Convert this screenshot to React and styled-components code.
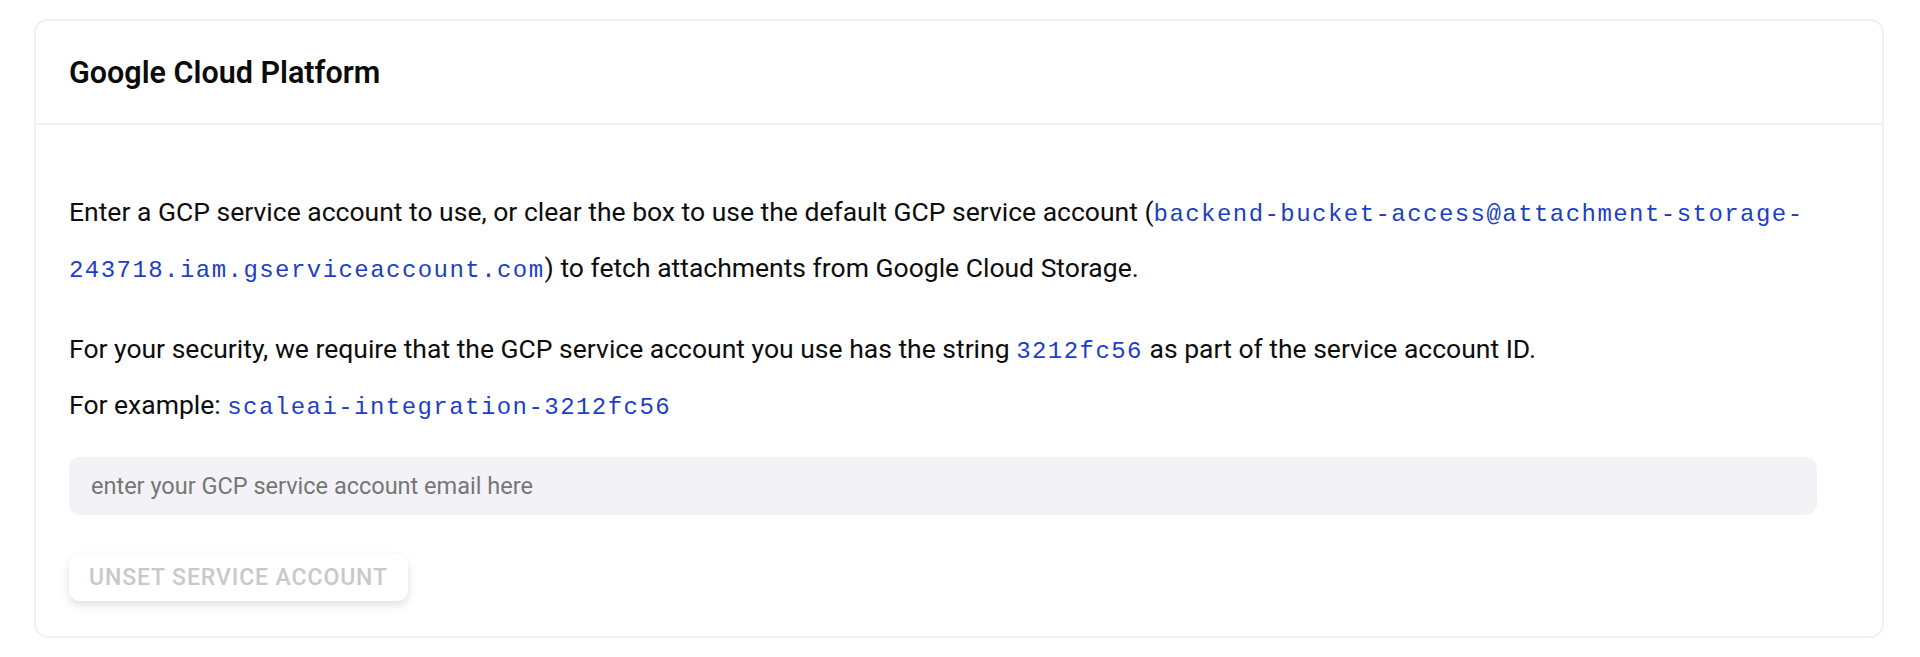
import React from "react";
import styled, { createGlobalStyle } from "styled-components";

const GlobalStyle = createGlobalStyle`
  * { box-sizing: border-box; }
  body {
    margin: 0;
    background: #ffffff;
    font-family: Roboto, "Noto Sans", Arial, sans-serif;
    color: #0d0d0d;
  }
`;

const Page = styled.div`
  padding: 19px 36px 20px 34px;
`;

const Card = styled.section`
  background: #ffffff;
  border: 2px solid #f1f1f3;
  border-radius: 14px;
`;

const CardHeader = styled.header`
  height: 104px;
  display: flex;
  align-items: center;
  padding: 0 33px;
  border-bottom: 2px solid #f1f1f3;
  h2 {
    margin: 0;
    font-size: 30.5px;
    font-weight: 600;
    color: #0b0b0b;
  }
`;

const CardBody = styled.div`
  padding: 60px 33px 35px 33px;
`;

const Paragraph = styled.p`
  margin: 0 0 ${(p) => p.$gap || 0}px;
  font-size: 26.5px;
  line-height: 53px;
  font-weight: 400;
  color: #0d0d0d;
`;

const Code = styled.code`
  font-family: "Liberation Mono", "DejaVu Sans Mono", monospace;
  font-size: 24px;
  letter-spacing: 1.45px;
  color: #1d3fc2;
`;

const InputWrap = styled.div`
  margin: 23px 32px 0 0;
`;

const Input = styled.input`
  display: block;
  width: 100%;
  height: 58px;
  border: none;
  outline: none;
  border-radius: 11px;
  background: #f3f3f7;
  padding: 0 22px;
  font-family: inherit;
  font-size: 23.5px;
  color: #111;
  &::placeholder {
    color: #767676;
  }
`;

const Button = styled.button`
  display: block;
  margin-top: 39px;
  height: 47px;
  padding: 0 20px;
  border: none;
  border-radius: 10px;
  background: #ffffff;
  box-shadow: 0 4px 10px rgba(0, 0, 0, 0.13);
  font-family: inherit;
  font-size: 23px;
  font-weight: 500;
  letter-spacing: 0.9px;
  text-transform: uppercase;
  color: #c9c9c9;
  cursor: not-allowed;
`;

function App() {
  return (
    <Page>
      <GlobalStyle />
      <Card>
        <CardHeader>
          <h2>Google Cloud Platform</h2>
        </CardHeader>
        <CardBody>
          <Paragraph $gap={25}>
            Enter a GCP service account to use, or clear the box to use the default GCP service account (
            <Code>backend-bucket-access@attachment-storage-</Code>
            <wbr />
            <Code>243718.iam.gserviceaccount.com</Code>
            ) to fetch attachments from Google Cloud Storage.
          </Paragraph>
          <Paragraph>
            For your security, we require that the GCP service account you use has the string{" "}
            <Code>3212fc56</Code> as part of the service account ID.
          </Paragraph>
          <Paragraph>
            For example: <Code>scaleai-integration-3212fc56</Code>
          </Paragraph>
          <InputWrap>
            <Input placeholder="enter your GCP service account email here" />
          </InputWrap>
          <Button disabled>Unset service account</Button>
        </CardBody>
      </Card>
    </Page>
  );
}

export default App;
